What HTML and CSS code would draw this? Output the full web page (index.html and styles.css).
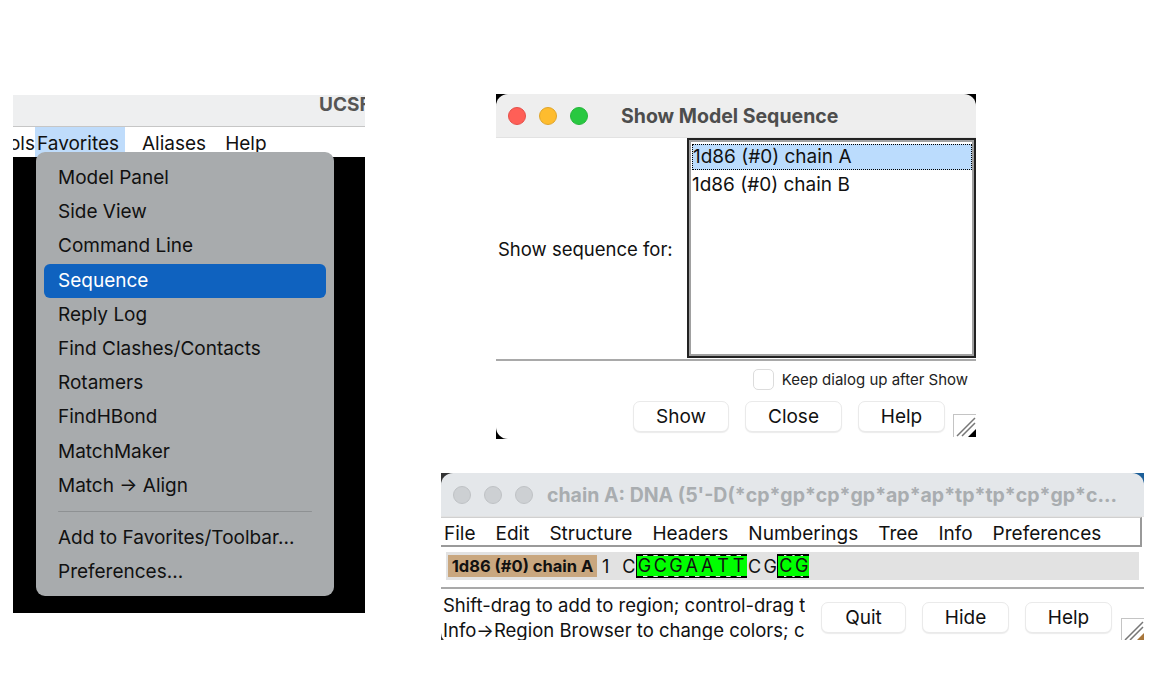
FILE: index.html
```html
<!doctype html>
<html lang="en">

<head>
    <meta charset="UTF-8">
    <link rel="stylesheet" href="styles.css">
    <title>Chimera sequence menus</title>
</head>

<body>
    <!-- main window, cropped -->
    <section class="win-main">
        <div class="main-title"><span>UCSF</span></div>
        <div class="main-menubar">
            <span class="cut">Tools</span>
            <span class="main-tab on">Favorites</span>
            <span class="main-tab">Aliases</span>
            <span class="main-tab">Help</span>
        </div>
        <div class="main-black"></div>
        <ul class="fav-menu">
            <li>Model Panel</li>
            <li>Side View</li>
            <li>Command Line</li>
            <li class="active">Sequence</li>
            <li>Reply Log</li>
            <li>Find Clashes/Contacts</li>
            <li>Rotamers</li>
            <li>FindHBond</li>
            <li>MatchMaker</li>
            <li>Match -&gt; Align</li>
            <li class="sep"></li>
            <li>Add to Favorites/Toolbar...</li>
            <li>Preferences...</li>
        </ul>
    </section>

    <!-- chain chooser -->
    <section class="win-dialog">
        <header class="titlebar">
            <div class="lights">
                <i class="red"></i><i class="yellow"></i><i class="green"></i>
            </div>
            <p class="dialog-title">Show Model Sequence</p>
        </header>
        <div class="dialog-body">
            <div class="chooser">
                <label>Show sequence for:</label>
                <div class="listbox">
                    <p class="chain sel">1d86 (#0) chain A</p>
                    <p class="chain">1d86 (#0) chain B</p>
                </div>
            </div>
            <div class="keep">
                <span class="checkbox"></span>
                <span>Keep dialog up after Show</span>
            </div>
            <div class="btn-row">
                <button class="btn w-show">Show</button>
                <button class="btn w-close">Close</button>
                <button class="btn w-help">Help</button>
                <svg class="grip" viewBox="0 0 23 23">
                    <rect x="0.5" y="0.5" width="23" height="23" fill="#fff" stroke="#c4c4c4"/>
                    <path d="M4 22 22 4M9 22 22 9" stroke="#777" stroke-width="1.5" fill="none"/>
                    <path d="M15 23 23 15V23Z" fill="#000"/>
                </svg>
            </div>
        </div>
    </section>

    <!-- sequence window -->
    <section class="win-seq">
        <header class="titlebar seq-titlebar">
            <div class="lights off">
                <i></i><i></i><i></i>
            </div>
            <p class="seq-title">chain A: DNA (5'-D(*cp*gp*cp*gp*ap*ap*tp*tp*cp*gp*c...</p>
        </header>
        <div class="seq-body">
            <div class="seq-menubar">
                <span>File</span>
                <span>Edit</span>
                <span>Structure</span>
                <span>Headers</span>
                <span>Numberings</span>
                <span>Tree</span>
                <span>Info</span>
                <span>Preferences</span>
            </div>
            <div class="seq-row">
                <b class="seq-name">1d86 (#0) chain A</b>
                <span class="seq-num">1</span>
                <span class="res">C</span>
                <div class="region">
                    <span class="res">G</span><span class="res">C</span><span class="res">G</span><span class="res">A</span><span class="res">A</span><span class="res">T</span><span class="res">T</span>
                </div>
                <span class="res">C</span><span class="res">G</span>
                <div class="region last">
                    <span class="res">C</span><span class="res">G</span>
                </div>
            </div>
            <div class="seq-foot">
                <p class="status">Shift-drag to add to region; control-drag to add new region<br>Info-&gt;Region Browser to change colors; control left/right arrow</p>
                <div class="seq-btns">
                    <button class="btn w-quit">Quit</button>
                    <button class="btn w-hide">Hide</button>
                    <button class="btn w-help2">Help</button>
                </div>
                <svg class="grip grip-seq" viewBox="0 0 23 23">
                    <rect x="0.5" y="0.5" width="23" height="23" fill="#fff" stroke="#c4c4c4"/>
                    <path d="M4 22 22 4M9 22 22 9" stroke="#777" stroke-width="1.5" fill="none"/>
                    <path d="M15 23 23 15V23Z" fill="#a8763a"/>
                </svg>
            </div>
        </div>
    </section>
</body>

</html>
```

FILE: styles.css
```css
* {
    margin: 0;
    padding: 0;
    box-sizing: border-box;
}

body {
    position: relative;
    width: 1164px;
    height: 674px;
    overflow: hidden;
    background: #fff;
    color: #111;
    font-family: "Inter", "Liberation Sans", sans-serif;
}

/* windows sit on a free canvas */
.win-main,
.win-dialog,
.win-seq {
    position: absolute;
    overflow: hidden;
}

.win-main {
    left: 13px;
    top: 95px;
    width: 352px;
    height: 518px;
    display: flex;
    flex-direction: column;
}

.main-title {
    height: 32px;
    flex: none;
    background: #eeeff0;
    border-bottom: 1px solid #c6c6c6;
    font-weight: 700;
    font-size: 19px;
    color: #555;
    padding: 0 0 0 306px;
    line-height: 20px;
    white-space: nowrap;
    overflow: hidden;
}

.main-menubar {
    height: 30px;
    flex: none;
    display: flex;
    font-size: 19px;
    line-height: 34px;
    background: #fff;
    position: relative;
    white-space: nowrap;
}

.cut {
    width: 22px;
    margin-right: 0;
    direction: rtl;
    overflow: hidden;
}

.main-tab {
    padding: 0 2px;
    margin-right: 15px;
}

.main-tab.on {
    background: #bfdcfb;
    width: 90px;
}

.main-black {
    flex: 1;
    background: #000;
}

.fav-menu {
    position: absolute;
    left: 23px;
    top: 57px;
    width: 298px;
    height: 444px;
    list-style: none;
    background: #a8abad;
    border-radius: 9px;
    padding: 9px 8px 0;
    font-size: 19px;
}

.fav-menu li {
    height: 34.2px;
    line-height: 34px;
    padding-left: 14px;
    border-radius: 6px;
}

.fav-menu li.active {
    background: #0f62bf;
    color: #fff;
}

.fav-menu li.sep {
    height: 1px;
    background: #8e9193;
    margin: 8px 14px 9px;
    padding: 0;
}

.titlebar {
    height: 44px;
    flex: none;
    display: flex;
    align-items: center;
    background: #eee;
    border-radius: 12px 12px 0 0;
    border-bottom: 1px solid #e2e2e2;
}

.lights {
    display: flex;
    gap: 13px;
    padding-left: 12px;
}

.lights i {
    display: block;
    width: 18px;
    height: 18px;
    border-radius: 50%;
    background: #cdd0d3;
    border: 1px solid #bfc2c5;
}

.lights .red {
    background: #ff5f57;
    border-color: #e5504a;
}

.lights .yellow {
    background: #febc2e;
    border-color: #e0a52a;
}

.lights .green {
    background: #28c840;
    border-color: #25b53a;
}

.win-dialog {
    left: 496px;
    top: 94px;
    width: 480px;
    height: 345px;
    display: flex;
    flex-direction: column;
    background: #000;
}

.dialog-title {
    margin-left: 33px;
    font-weight: 700;
    font-size: 19.5px;
    color: #4d4d4d;
    white-space: nowrap;
}

.dialog-body {
    flex: 1;
    background: #fff;
    border-radius: 0 0 0 12px;
    display: flex;
    flex-direction: column;
}

.chooser {
    height: 223px;
    flex: none;
    display: flex;
    align-items: center;
    border-bottom: 2px solid #a9a9a9;
    font-size: 18.5px;
}

.chooser label {
    width: 191px;
    padding-left: 2px;
    white-space: nowrap;
}

.listbox {
    flex: 1;
    height: 220px;
    align-self: flex-start;
    border: 2px solid #222;
    outline: 2px solid #a0a0a0;
    outline-offset: -4px;
    padding: 2px 2px 0 3px;
    font-size: 19px;
}

.chain {
    height: 26px;
    line-height: 25px;
    white-space: nowrap;
    margin: 2px 0 0;
}

.chain.sel {
    background: #bbdcfd;
    border: 1px dotted #000;
    line-height: 24px;
}

.keep {
    display: flex;
    align-items: center;
    justify-content: flex-end;
    gap: 8px;
    height: 29px;
    margin-top: 4px;
    padding-right: 8px;
    font-size: 15px;
    color: #222;
}

.checkbox {
    width: 21px;
    height: 21px;
    border: 1px solid #dcdcdc;
    border-radius: 5px;
    background: #fff;
}

.btn-row {
    display: flex;
    align-items: flex-start;
    padding: 7px 0 0 137px;
    gap: 16px;
    flex: 1;
}

.btn {
    height: 31px;
    background: #fff;
    border: 1px solid #eaeaea;
    border-radius: 7px;
    box-shadow: 0 1px 1px rgba(0, 0, 0, 0.08);
    font: 19px "Inter", "Liberation Sans", sans-serif;
    color: #111;
}

.w-show { width: 96px; }
.w-close { width: 97px; }
.w-help { width: 87px; }
.w-quit { width: 85px; }
.w-hide { width: 87px; }
.w-help2 { width: 87px; }

.grip {
    width: 23px;
    height: 23px;
    margin: 13px 0 0 -8px;
    flex: none;
}

.win-seq {
    left: 441px;
    top: 473px;
    width: 703px;
    height: 167px;
    display: flex;
    flex-direction: column;
    background: linear-gradient(90deg, #333, #1c5f99);
}

.seq-titlebar {
    background: #e4e7ea;
}

.lights.off {
    gap: 13px;
}

.seq-title {
    margin-left: 14px;
    font-weight: 700;
    font-size: 19.5px;
    color: #a9adb0;
    white-space: nowrap;
}

.seq-body {
    flex: 1;
    background: #fff;
    border-radius: 0 0 0 10px;
    display: flex;
    flex-direction: column;
}

.seq-menubar {
    height: 30px;
    flex: none;
    display: flex;
    gap: 20px;
    margin-right: 2px;
    padding-left: 3px;
    border: 1px solid #d0d0d0;
    border-left: 0;
    border-right: 2px solid #999;
    border-bottom: 2px solid #9a9a9a;
    font-size: 19px;
    line-height: 31px;
    white-space: nowrap;
}

.seq-row {
    height: 28px;
    margin: 5px 5px 0;
    flex: none;
    background: #e2e2e2;
    display: flex;
    align-items: center;
    font-size: 18px;
    white-space: nowrap;
}

.seq-name {
    margin-left: 2px;
    width: 149px;
    height: 22px;
    line-height: 22px;
    background: #c9a77f;
    font-size: 16.5px;
    text-align: center;
}

.seq-num {
    margin: 0 9px 0 5px;
    width: 10px;
}

.res {
    width: 15.7px;
    text-align: center;
    flex: none;
}

.region {
    display: flex;
    height: 24px;
    line-height: 20px;
    background: #0f0;
    background-clip: padding-box;
    border-top: 2px dashed #000;
    border-bottom: 2px dashed #000;
    box-shadow: -1px 0 0 #000;
    width: 110px;
}

.region.last {
    width: 31px;
}

.seq-foot {
    flex: 1;
    display: flex;
    margin-top: 7px;
    border-top: 2px solid #a9a9a9;
    position: relative;
}

.status {
    width: 366px;
    padding-left: 2px;
    overflow: hidden;
    white-space: nowrap;
    font-size: 18.5px;
    line-height: 25px;
    padding-top: 4px;
}

.seq-btns {
    display: flex;
    gap: 16px;
    margin: 13px 0 0 16px;
}

.grip-seq {
    margin: 29px 0 0 9px;
}
```
